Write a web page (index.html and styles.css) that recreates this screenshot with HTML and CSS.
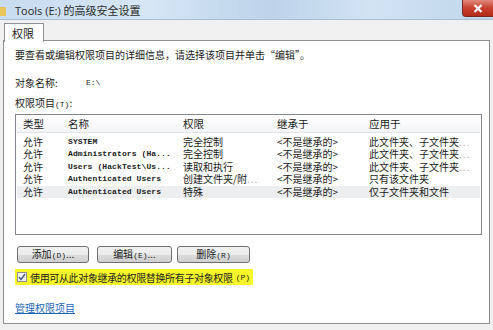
FILE: index.html
```html
<!DOCTYPE html>
<html lang="zh-CN">
<head>
    <meta charset="UTF-8">
    <title>Tools (E:) 的高级安全设置</title>
    <link rel="stylesheet" href="styles.css">
</head>
<body>
    <div class="window">
        <div class="titlebar">
            <span class="folder"></span>
            <span class="title">Tools (E:) 的高级安全设置</span>
            <span class="close">
                <svg width="10" height="9" viewBox="0 0 10 9"><path d="M1.5 1 L8.5 8 M8.5 1 L1.5 8" stroke="#fff" stroke-width="2.2"/></svg>
            </span>
        </div>

        <div class="tabs">
            <div class="tab">权限</div>
        </div>

        <div class="panel">
            <p class="intro">要查看或编辑权限项目的详细信息，请选择该项目并单击“编辑”。</p>

            <div class="object-row">
                <span class="object-label">对象名称:</span>
                <span class="object-name">E:\</span>
            </div>

            <div class="list-label">权限项目<span class="mono">(T)</span>:</div>

            <div class="list">
                <div class="row head">
                    <span>类型</span>
                    <span>名称</span>
                    <span>权限</span>
                    <span>继承于</span>
                    <span>应用于</span>
                </div>
                <div class="row">
                    <span>允许</span>
                    <span class="mono">SYSTEM</span>
                    <span>完全控制</span>
                    <span>&lt;不是继承的&gt;</span>
                    <span>此文件夹、子文件夹<i class="more">...</i></span>
                </div>
                <div class="row">
                    <span>允许</span>
                    <span class="mono">Administrators (Ha...</span>
                    <span>完全控制</span>
                    <span>&lt;不是继承的&gt;</span>
                    <span>此文件夹、子文件夹<i class="more">...</i></span>
                </div>
                <div class="row">
                    <span>允许</span>
                    <span class="mono">Users (HackTest\Us...</span>
                    <span>读取和执行</span>
                    <span>&lt;不是继承的&gt;</span>
                    <span>此文件夹、子文件夹<i class="more">...</i></span>
                </div>
                <div class="row">
                    <span>允许</span>
                    <span class="mono">Authenticated Users</span>
                    <span>创建文件夹/附<i class="more">...</i></span>
                    <span>&lt;不是继承的&gt;</span>
                    <span>只有该文件夹</span>
                </div>
                <div class="row selected">
                    <span>允许</span>
                    <span class="mono">Authenticated Users</span>
                    <span>特殊</span>
                    <span>&lt;不是继承的&gt;</span>
                    <span>仅子文件夹和文件</span>
                </div>
            </div>

            <div class="buttons">
                <button class="btn btn-add">添加<span class="mono">(D)</span>...</button>
                <button class="btn btn-edit">编辑<span class="mono">(E)</span>...</button>
                <button class="btn btn-del">删除<span class="mono">(R)</span></button>
            </div>

            <label class="inherit">
                <span class="check">
                    <svg width="8" height="8" viewBox="0 0 8 8"><path d="M1 4 L3 6.5 L7 1" fill="none" stroke="#4a5a8c" stroke-width="1.4"/></svg>
                </span>
                使用可从此对象继承的权限替换所有子对象权限<span class="mono">(P)</span>
            </label>

            <a class="manage" href="#">管理权限项目</a>
        </div>
    </div>
</body>
</html>
```

FILE: styles.css
```css
body {
    margin: 0;
    padding: 0;
    font-family: "Noto Sans CJK SC", "DejaVu Sans", sans-serif;
    font-size: 10px;
    color: #1a1a1a;
    background: #f0f0f0;
}
.window {
    width: 493px;
    height: 330px;
    overflow: hidden;
    background: #f0f0f0;
}
.titlebar {
    height: 20px;
    display: flex;
    align-items: center;
    position: relative;
    background: linear-gradient(90deg, #c8dcf0 0%, #d6e6f5 30%, #bcd3ea 55%, #d2e3f3 75%, #c0d6ec 100%);
    border-bottom: 1px solid #a9bdd3;
    box-sizing: border-box;
}
.folder {
    width: 6px;
    height: 9px;
    margin-right: 9px;
    margin-top: 3px;
    background: #e8c45a;
    border-radius: 0 1px 1px 0;
}
.title {
    font-family: "Open Sans", "Noto Sans CJK SC", sans-serif;
    font-size: 11px;
    color: #2a2a2a;
}
.close {
    position: absolute;
    right: 0;
    top: 0;
    width: 31px;
    height: 17px;
    display: flex;
    align-items: center;
    justify-content: center;
    background: linear-gradient(#e08a7c, #c8402f 50%, #b52c18);
    border: 1px solid #7a2a20;
    border-top: none;
    border-right: none;
    border-radius: 0 0 0 4px;
    box-sizing: border-box;
}
.tabs {
    height: 21px;
    padding: 3px 0 0 4px;
    box-sizing: border-box;
    display: flex;
}
.tab {
    width: 40px;
    height: 19px;
    box-sizing: border-box;
    border: 1px solid #8e8f8f;
    border-bottom: none;
    background: #fff;
    padding: 1px 0 0 7px;
    font-size: 11px;
    position: relative;
    z-index: 1;
}
.panel {
    margin: -1px 3px 0 3px;
    height: 284px;
    box-sizing: border-box;
    background: #fff;
    border: 1px solid #8e8f8f;
    padding: 7px 8px 0 11px;
}
.intro {
    margin: 0;
    font-size: 10px;
    line-height: 14px;
}
.mono {
    font-family: "Liberation Mono", monospace;
    font-size: 8px;
}
.object-row {
    margin-top: 14px;
    display: flex;
    line-height: 14px;
}
.object-label {
    width: 71px;
}
.object-name {
    font-family: "Liberation Mono", monospace;
    font-size: 8px;
}
.list-label {
    margin-top: 6px;
    line-height: 14px;
}
.list {
    margin-top: 2px;
    width: 467px;
    height: 121px;
    box-sizing: border-box;
    border: 1px solid #828790;
    padding: 1px;
}
.row {
    display: grid;
    grid-template-columns: 45px 115px 94px 92px 1fr;
    height: 12.4px;
    line-height: 12px;
    padding-left: 6px;
    white-space: nowrap;
}
.row .mono {
    font-weight: bold;
    letter-spacing: 0.1px;
}
.row.head {
    height: 16px;
    line-height: 15px;
    margin-bottom: 3px;
    background: linear-gradient(#fff, #f3f4f6);
    border-bottom: 1px solid #e2e3e5;
    font-size: 10.5px;
}
.row.selected {
    background: #eceef0;
}
.more {
    font-style: normal;
    color: #b0b0b0;
    letter-spacing: 1px;
}
.buttons {
    margin-top: 11px;
    margin-left: 2px;
    display: flex;
}
.btn {
    height: 17px;
    padding: 0;
    box-sizing: border-box;
    border: 1px solid #707070;
    border-radius: 3px;
    background: linear-gradient(#f2f2f2 0%, #ebebeb 50%, #dddddd 51%, #cfcfcf 100%);
    font-family: "Noto Sans CJK SC", sans-serif;
    font-size: 10px;
    line-height: 14px;
    color: #1a1a1a;
}
.btn-add {
    width: 72px;
    margin-right: 8px;
}
.btn-edit {
    width: 75px;
    margin-right: 5px;
}
.btn-del {
    width: 73px;
}
.inherit {
    margin-top: 6px;
    display: flex;
    align-items: center;
    width: fit-content;
    height: 16px;
    padding-right: 3px;
    background: #f6f62a;
    font-size: 10px;
    letter-spacing: -0.35px;
    white-space: nowrap;
}
.check {
    width: 10px;
    height: 10px;
    margin: 0 3px 0 2px;
    box-sizing: border-box;
    border: 1px solid #8f8f8f;
    background: #f4f4f4;
    display: flex;
    align-items: center;
    justify-content: center;
}
.inherit .mono {
    margin-left: 3px;
    letter-spacing: 0;
}
.manage {
    display: inline-block;
    margin-top: 15px;
    color: #1c66b8;
    font-size: 10px;
    text-decoration: underline;
}
```
